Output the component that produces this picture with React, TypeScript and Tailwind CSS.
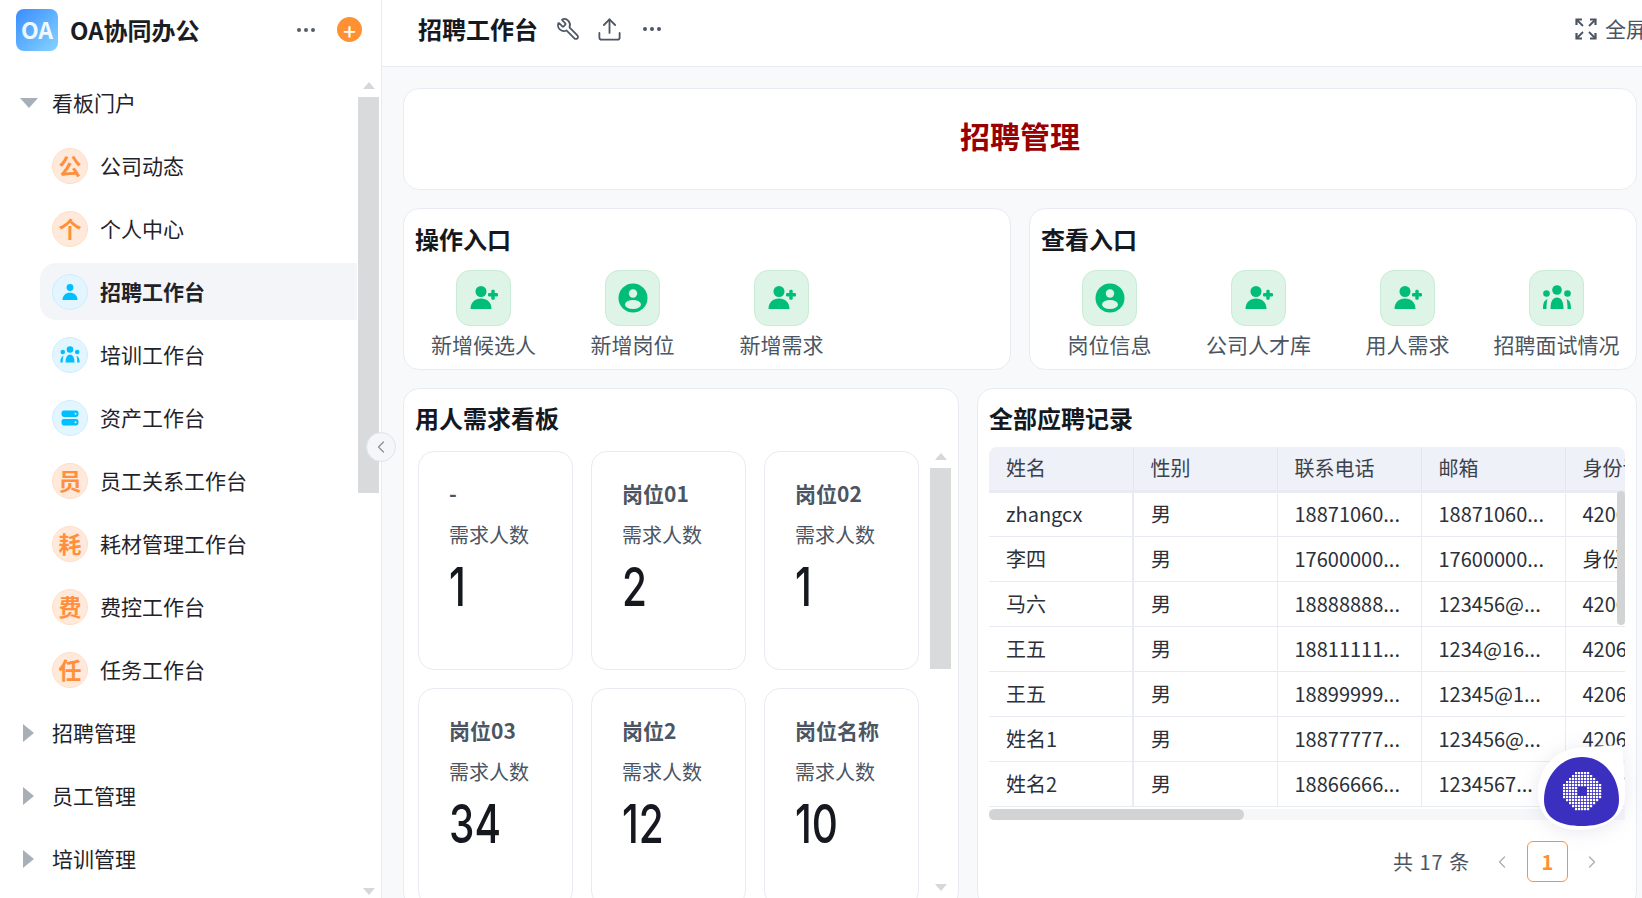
import { ChevronLeft, ChevronRight, Ellipsis, Upload, Wrench } from "lucide-react";

const GREEN = "#00bd78";

function UserPlusIcon() {
  return (
    <svg width="30" height="30" viewBox="0 0 30 30" fill={GREEN}>
      <circle cx="12" cy="8.5" r="5.5" />
      <path d="M1.5 26c0-6.6 4.6-10.5 10.5-10.5S22.500 19.400 22.500 26z" />
      <rect x="19" y="10" width="10" height="3.4" rx="1.2" />
      <rect x="22.300" y="6.700" width="3.400" height="10" rx="1.200" />
    </svg>
  );
}

function PersonCircleIcon() {
  return (
    <svg width="30" height="30" viewBox="0 0 30 30">
      <circle cx="15" cy="15" r="14.500" fill={GREEN} />
      <circle cx="15" cy="10.500" r="4.200" fill="#def4e6" />
      <ellipse cx="15" cy="21.500" rx="8" ry="4.500" fill="#def4e6" />
    </svg>
  );
}

function GroupIcon({ color = GREEN, size = 32 }: { color?: string; size?: number }) {
  return (
    <svg width={size} height={size} viewBox="0 0 32 32" fill={color}>
      <circle cx="16" cy="8" r="4.800" />
      <circle cx="5.500" cy="11.500" r="3.300" />
      <circle cx="26.500" cy="11.500" r="3.300" />
      <path d="M9.500 27c0-8 2.500-11.500 6.500-11.500S22.500 19 22.500 27z" />
      <path d="M2 27c0-5.500 1-8.500 4.500-10-0.800 2.500-1 6-1 10z" />
      <path d="M30 27c0-5.500-1-8.500-4.500-10 0.800 2.500 1 6 1 10z" />
    </svg>
  );
}

function PersonIcon() {
  return (
    <svg width="20" height="20" viewBox="0 0 20 20" fill="#00bfff">
      <circle cx="10" cy="5.500" r="3.400" />
      <path d="M2.500 18c0-4.600 3.200-7.200 7.500-7.200s7.500 2.600 7.500 7.200z" />
    </svg>
  );
}

function ServerIcon() {
  return (
    <svg width="20" height="20" viewBox="0 0 20 20">
      <rect x="1.500" y="2.500" width="17" height="6.500" rx="2.400" fill="#00bfff" />
      <rect x="1.500" y="11" width="17" height="6.500" rx="2.400" fill="#00bfff" />
      <circle cx="15.500" cy="5.750" r="1" fill="#e3f5ff" />
      <circle cx="15.500" cy="14.250" r="1" fill="#e3f5ff" />
    </svg>
  );
}

function FullscreenIcon() {
  return (
    <svg width="22" height="22" viewBox="0 0 22 22" fill="none" stroke="#4b5563" strokeWidth="2.200">
      <path d="M1.500 7V1.500H7M15 1.500h5.500V7M20.500 15v5.500H15M7 20.500H1.500V15" />
      <path d="M2 2l6 6M20 2l-6 6M20 20l-6-6M2 20l6-6" strokeWidth="1.800" />
    </svg>
  );
}

function Caret({ open }: { open?: boolean }) {
  return open ? (
    <svg width="18" height="10" viewBox="0 0 18 10" fill="#a9afb8">
      <path d="M0 0h18L9 10z" />
    </svg>
  ) : (
    <svg width="11" height="18" viewBox="0 0 11 18" fill="#a9afb8">
      <path d="M0 0l11 9-11 9z" />
    </svg>
  );
}

function ScrollArrow({ down }: { down?: boolean }) {
  return (
    <svg width="12" height="7" viewBox="0 0 12 7" fill="#d5d7db">
      <path d={down ? "M0 0h12L6 7z" : "M6 0l6 7H0z"} />
    </svg>
  );
}

function Avatar({ children, blue }: { children: React.ReactNode; blue?: boolean }) {
  return (
    <div
      className={
        blue
          ? "flex h-9 w-9 shrink-0 items-center justify-center rounded-full border border-[#cdeeff] bg-[#e3f5ff]"
          : "flex h-9 w-9 shrink-0 items-center justify-center rounded-full border border-[#ffdfc6] bg-[#ffe9da] text-[23px] leading-none font-bold text-[#ff8f3c]"
      }
    >
      {children}
    </div>
  );
}

const menuItems: { label: string; icon: React.ReactNode; blue?: boolean; active?: boolean }[] = [
  { label: "公司动态", icon: "公" },
  { label: "个人中心", icon: "个" },
  { label: "招聘工作台", icon: <PersonIcon />, blue: true, active: true },
  { label: "培训工作台", icon: <GroupIcon color="#00bfff" size={22} />, blue: true },
  { label: "资产工作台", icon: <ServerIcon />, blue: true },
  { label: "员工关系工作台", icon: "员" },
  { label: "耗材管理工作台", icon: "耗" },
  { label: "费控工作台", icon: "费" },
  { label: "任务工作台", icon: "任" },
];

function Sidebar() {
  return (
    <aside className="relative flex h-full w-[382px] shrink-0 flex-col border-r border-[#e8ebf2] bg-white">
      <div className="flex h-[67px] shrink-0 items-center pb-[8px] pl-4">
        <div className="flex h-[42px] w-[42px] items-center justify-center rounded-lg bg-gradient-to-br from-[#3b8bff] to-[#85d4ff] text-[23px] font-semibold text-white/90">
          OA
        </div>
        <div className="ml-3 text-[24px] font-bold text-[#1a1d23]">OA协同办公</div>
        <Ellipsis className="ml-auto text-[#565d68]" size={24} />
        <div className="mr-[19px] ml-[19px] flex h-[25px] w-[25px] items-center justify-center rounded-full bg-[#ff9133] text-[22px] leading-none font-medium text-white">
          +
        </div>
      </div>
      <div className="flex min-h-0 flex-1">
        <div className="mr-px w-[357px] shrink-0 pt-[4px] text-[21px] text-[#1f2329]">
          <div className="flex h-[63px] items-center pl-5">
            <div className="w-8">
              <Caret open />
            </div>
            看板门户
          </div>
          {menuItems.map((m) => (
            <div className="flex h-[63px] items-center" key={m.label}>
              <div
                className={
                  m.active
                    ? "ml-10 flex h-[57px] w-[317px] items-center gap-3 rounded-l-2xl bg-[#f3f5f9] pl-3 font-bold"
                    : "ml-10 flex h-[57px] w-[317px] items-center gap-3 pl-3"
                }
              >
                <Avatar blue={m.blue}>{m.icon}</Avatar>
                {m.label}
              </div>
            </div>
          ))}
          {["招聘管理", "员工管理", "培训管理"].map((g) => (
            <div className="flex h-[63px] items-center pl-[23px]" key={g}>
              <div className="w-[29px]">
                <Caret />
              </div>
              {g}
            </div>
          ))}
        </div>
        <div className="flex w-[21px] flex-col items-center pt-[15px] pb-[3px]">
          <ScrollArrow />
          <div className="mt-2 h-[396px] w-full bg-[#d9dadc]" />
          <div className="mt-auto">
            <ScrollArrow down />
          </div>
        </div>
      </div>
      <div className="absolute top-[432px] right-[-15px] z-10 flex h-[30px] w-[30px] items-center justify-center rounded-full border border-[#dfe3ec] bg-[#f5f6fa] text-[#8a9099]">
        <ChevronLeft size={20} strokeWidth={1.500} />
      </div>
    </aside>
  );
}

function Card({ className, children }: { className: string; children: React.ReactNode }) {
  return <div className={`rounded-2xl border border-[#e8ebf2] bg-white ${className}`}>{children}</div>;
}

function EntryCard({ title, items }: { title: string; items: { label: string; icon: React.ReactNode }[] }) {
  return (
    <Card className="h-[162px] flex-1 px-[5px]">
      <div className="mt-[14px] pl-[6px] text-[24px] leading-[32px] font-bold text-[#15181e]">{title}</div>
      <div className="mt-[15px] flex">
        {items.map((it) => (
          <div className="flex w-[149px] flex-col items-center whitespace-nowrap" key={it.label}>
            <div className="flex h-[56px] w-[55px] items-center justify-center rounded-[14px] border border-[#c8ecd5] bg-[#def4e6]">
              {it.icon}
            </div>
            <div className="mt-[2px] text-[21px] leading-[32px] text-[#4b5563]">{it.label}</div>
          </div>
        ))}
      </div>
    </Card>
  );
}

const demands = [
  { name: "-", count: "1" },
  { name: "岗位01", count: "2" },
  { name: "岗位02", count: "1" },
  { name: "岗位03", count: "34" },
  { name: "岗位2", count: "12" },
  { name: "岗位名称", count: "10" },
];

function DemandBoard() {
  return (
    <Card className="h-[520px] w-[556px] shrink-0 pt-[13px]">
      <div className="pl-[11px] text-[24px] leading-[32px] font-bold text-[#15181e]">用人需求看板</div>
      <div className="mt-[17px] flex pl-[14px]">
        <div className="grid w-[501px] grid-cols-3 gap-[18px]">
          {demands.map((d) => (
            <div className="h-[219px] rounded-2xl border border-[#e8ebf2] pt-[25px] pl-[30px]" key={d.name + d.count}>
              <div className="h-8 text-[21px] leading-8 font-bold text-[#4b5563]">{d.name}</div>
              <div className="mt-[10px] text-[20px] leading-8 text-[#4b5563]">需求人数</div>
              <div className="mt-[1px] origin-left scale-x-[0.75] [font-family:Inter,sans-serif] text-[54px] leading-[70px] font-medium text-[#15181e]">
                {d.count}
              </div>
            </div>
          ))}
        </div>
        <div className="ml-[11px] flex h-[440px] w-[21px] flex-col items-center pt-[2px]">
          <ScrollArrow />
          <div className="mt-2 h-[201px] w-full bg-[#d9dadc]" />
          <div className="mt-auto">
            <ScrollArrow down />
          </div>
        </div>
      </div>
    </Card>
  );
}

const rows = [
  ["zhangcx", "18871060...", "18871060...", "4206"],
  ["李四", "17600000...", "17600000...", "身份证"],
  ["马六", "18888888...", "123456@...", "4206"],
  ["王五", "18811111...", "1234@16...", "4206"],
  ["王五", "18899999...", "12345@1...", "4206"],
  ["姓名1", "18877777...", "123456@...", "4206"],
  ["姓名2", "18866666...", "1234567...", "4206"],
];

function RecordTable() {
  return (
    <Card className="relative h-[520px] flex-1 pt-[13px]">
      <div className="pl-[11px] text-[24px] leading-[32px] font-bold text-[#15181e]">全部应聘记录</div>
      <div className="relative mt-[13px] ml-[11px] h-[373px] w-[636px] overflow-hidden">
        <div className="h-[362px] overflow-hidden rounded-t-lg">
          <table className="w-[720px] table-fixed border-collapse text-[20px] text-[#2b3039]">
            <thead>
              <tr className="h-[44px] border-b-[3px] border-[#e8ebf2] bg-[#eef1f8] text-left text-[#3c424c]">
                {["姓名", "性别", "联系电话", "邮箱", "身份证号"].map((h, i) => (
                  <th className={i < 4 ? "border-r border-[#e1e5ee] pl-[17px] font-normal" : "pl-[17px] font-normal"} key={h}>
                    {h}
                  </th>
                ))}
              </tr>
            </thead>
            <tbody>
              {rows.map((r, i) => (
                <tr className="h-[45px] border-b border-[#e8ebf2]" key={i}>
                  <td className="border-r-2 border-[#e8ebf2] pl-[17px]">{r[0]}</td>
                  <td className="border-r border-[#e8ebf2] pl-[17px]">男</td>
                  <td className="border-r border-[#e8ebf2] pl-[17px]">{r[1]}</td>
                  <td className="border-r border-[#e8ebf2] pl-[17px]">{r[2]}</td>
                  <td className="pl-[17px] whitespace-nowrap">{r[3]}</td>
                </tr>
              ))}
            </tbody>
          </table>
        </div>
        <div className="h-[11px] bg-[#f6f7f9]">
          <div className="h-[11px] w-[255px] rounded-full bg-[#d2d3d5]" />
        </div>
        <div className="absolute top-[44px] right-0 h-[134px] w-2 rounded-full bg-[#d2d3d5]" />
      </div>
      <div className="mt-[21px] flex h-[41px] items-center pl-[415px] text-[20px] text-[#4b5563]">
        <span className="w-[93px] tracking-[1px] whitespace-nowrap">共 17 条</span>
        <ChevronLeft className="ml-[6px] text-[#a9afb8]" size={20} strokeWidth={1.500} />
        <div className="ml-[15px] flex h-[41px] w-[41px] items-center justify-center rounded-md border border-[#ff9133] font-bold text-[#ff9133]">
          1
        </div>
        <ChevronRight className="ml-[14px] text-[#a9afb8]" size={20} strokeWidth={1.500} />
      </div>
    </Card>
  );
}

function AssistantBlob() {
  const dots: { x: number; y: number }[] = [];
  for (let ix = -6; ix <= 6; ix++) {
    for (let iy = -6; iy <= 6; iy++) {
      const d = Math.hypot(ix, iy);
      const hole = Math.abs(ix) <= 1 && Math.abs(iy) <= 1;
      if (d <= 6.400 && !hole) dots.push({ x: 46 + ix * 3, y: 47 + iy * 3 });
    }
  }
  return (
    <svg
      className="absolute top-[744px] left-[1536px] z-20 drop-shadow-[0_2px_10px_rgba(70,70,130,0.12)]"
      width="92"
      height="90"
      viewBox="0 0 92 90"
    >
      <path d="M41 4C58 2 72 2 86 1c1 19 4 34 3 52-1 21-23 33-45 33C20 86 2 74 2 49 2 24 20 6 41 4z" fill="#fff" />
      <path d="M46 13c22 0 37 20 37 43 0 18-15 26-37 26C23 82 8 74 8 56c0-23 16-43 38-43z" fill="#3b2fbf" />
      {dots.map((d) => (
        <rect key={`${d.x}-${d.y}`} x={d.x - 1} y={d.y - 1} width="2.200" height="2.200" fill="#fff" />
      ))}
    </svg>
  );
}

export default function App() {
  return (
    <div className="relative flex h-[898px] w-[1642px] overflow-hidden bg-white [font-family:'Noto_Sans_CJK_SC','Noto_Sans',sans-serif]">
      <Sidebar />
      <main className="flex min-w-0 flex-1 flex-col bg-[#f8f9fb]">
        <header className="flex h-[67px] shrink-0 items-center border-b border-[#e8ebf2] bg-white pb-[8px] pl-[36px]">
          <div className="text-[24px] font-bold text-[#15181e]">招聘工作台</div>
          <Wrench className="ml-[18px] -scale-x-100 text-[#4b5563]" size={24} strokeWidth={1.700} />
          <Upload className="ml-4 text-[#4b5563]" size={27} strokeWidth={1.600} />
          <Ellipsis className="ml-[17px] text-[#4b5563]" size={24} />
          <div className="ml-auto flex shrink-0 items-center gap-2 text-[21px] whitespace-nowrap text-[#4b5563]">
            <FullscreenIcon />
            <div className="mr-[-5px] w-[42px] overflow-hidden">全屏</div>
          </div>
        </header>
        <div className="flex flex-col gap-[18px] pt-[21px] pr-[5px] pl-[21px]">
          <Card className="flex h-[102px] items-center justify-center pb-2 text-[30px] font-bold text-[#990000]">招聘管理</Card>
          <div className="flex gap-[18px]">
            <EntryCard
              title="操作入口"
              items={[
                { label: "新增候选人", icon: <UserPlusIcon /> },
                { label: "新增岗位", icon: <PersonCircleIcon /> },
                { label: "新增需求", icon: <UserPlusIcon /> },
              ]}
            />
            <EntryCard
              title="查看入口"
              items={[
                { label: "岗位信息", icon: <PersonCircleIcon /> },
                { label: "公司人才库", icon: <UserPlusIcon /> },
                { label: "用人需求", icon: <UserPlusIcon /> },
                { label: "招聘面试情况", icon: <GroupIcon /> },
              ]}
            />
          </div>
          <div className="flex gap-[18px]">
            <DemandBoard />
            <RecordTable />
          </div>
        </div>
      </main>
      <AssistantBlob />
    </div>
  );
}
